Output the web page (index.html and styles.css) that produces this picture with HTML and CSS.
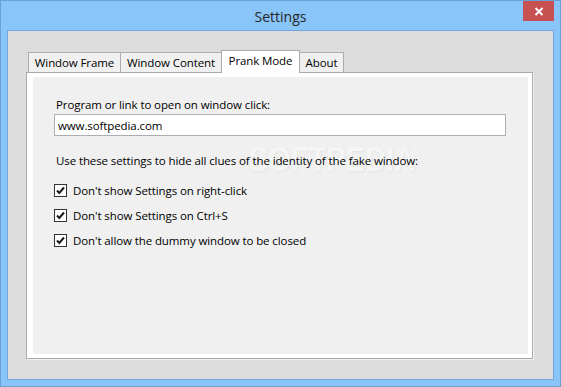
FILE: index.html
```html
<!DOCTYPE html>
<html lang="en">
<head>
    <meta charset="UTF-8">
    <title>Settings</title>
    <link rel="stylesheet" href="styles.css">
</head>
<body>
    <div class="window">
        <div class="titlebar">
            <span class="title">Settings</span>
            <button class="close" title="Close">
                <svg width="10" height="9" viewBox="0 0 10 9">
                    <path d="M1.5 1 L8.5 8 M8.5 1 L1.5 8" stroke="#fff" stroke-width="2"/>
                </svg>
            </button>
        </div>
        <div class="client">
            <div class="tabs">
                <div class="tab tab-frame">Window Frame</div>
                <div class="tab tab-content">Window Content</div>
                <div class="tab tab-prank active">Prank Mode</div>
                <div class="tab tab-about">About</div>
            </div>
            <div class="panel">
                <div class="page">
                    <div class="watermark">SOFTPEDIA<span class="reg">®</span></div>

                    <div class="caption">Program or link to open on window click:</div>
                    <input class="textbox" type="text" value="www.softpedia.com">
                    <div class="caption spaced">Use these settings to hide all clues of the identity of the fake window:</div>

                    <div class="checks">
                        <label class="check">
                            <span class="box"><svg width="11" height="11" viewBox="0 0 11 11"><path d="M2 5.5 L4.3 8 L9 2.5" fill="none" stroke="#1a1a1a" stroke-width="2"/></svg></span>
                            Don't show Settings on right-click
                        </label>
                        <label class="check">
                            <span class="box"><svg width="11" height="11" viewBox="0 0 11 11"><path d="M2 5.5 L4.3 8 L9 2.5" fill="none" stroke="#1a1a1a" stroke-width="2"/></svg></span>
                            Don't show Settings on Ctrl+S
                        </label>
                        <label class="check">
                            <span class="box"><svg width="11" height="11" viewBox="0 0 11 11"><path d="M2 5.5 L4.3 8 L9 2.5" fill="none" stroke="#1a1a1a" stroke-width="2"/></svg></span>
                            Don't allow the dummy window to be closed
                        </label>
                    </div>
                </div>
            </div>
        </div>
    </div>
</body>
</html>
```

FILE: styles.css
```css
* {
    box-sizing: border-box;
}

body {
    margin: 0;
    width: 561px;
    height: 387px;
    font-family: 'Open Sans', 'Noto Sans', sans-serif;
    font-size: 11.5px;
    letter-spacing: -0.1px;
    color: #000;
    user-select: none;
}

.window {
    width: 561px;
    height: 387px;
    background: #89c5f8;
    border: 1px solid #6c9fd5;
    padding: 0 6px 6px 6px;
    display: flex;
    flex-direction: column;
}

.titlebar {
    height: 29px;
    display: grid;
    grid-template-columns: 1fr auto 1fr;
    align-items: center;
}

.title {
    grid-column: 2;
    font-size: 14px;
    letter-spacing: 0;
    color: #262626;
    padding-top: 1px;
}

.close {
    grid-column: 3;
    justify-self: end;
    align-self: start;
    width: 31px;
    height: 20px;
    border: none;
    padding: 0;
    background: #c75050;
    display: flex;
    align-items: center;
    justify-content: center;
}

.client {
    flex: 1;
    background: #dcdcdc;
    border: 1px solid #74a6d9;
    padding: 19px 20px 20px 18px;
    display: flex;
    flex-direction: column;
}

.tabs {
    display: flex;
    align-items: flex-end;
    padding-left: 2px;
    height: 22px;
}

.tab {
    height: 20px;
    line-height: 19px;
    text-align: center;
    background: #f0f0f0;
    border: 1px solid #acacac;
    border-bottom: none;
    margin-right: -1px;
    white-space: nowrap;
}

.tab-frame { width: 93px; }
.tab-content { width: 102px; }
.tab-prank { width: 79px; }
.tab-about { width: 45px; }

.tab.active {
    height: 23px;
    line-height: 20px;
    background: #fff;
    margin-bottom: -1px;
    position: relative;
    z-index: 1;
}

.panel {
    flex: 1;
    background: #fff;
    border: 1px solid #a9a9a9;
    padding: 4px 4px 4px 6px;
    box-shadow: 1px 1px 0 #f2f2f2;
    display: flex;
}

.page {
    flex: 1;
    background: #f0f0f0;
    padding: 20px 21px 0 21px;
    position: relative;
    z-index: 0;
}

.caption {
    line-height: 16px;
    padding-left: 2px;
    margin-bottom: 1px;
}

.caption.spaced {
    margin-top: 17px;
}

.textbox {
    display: block;
    width: 452px;
    height: 22px;
    border: 1px solid #abadb3;
    background: #fff;
    padding: 0 3px;
    font: inherit;
    letter-spacing: inherit;
    color: #000;
    outline: none;
}

.checks {
    margin-top: 13px;
    display: flex;
    flex-direction: column;
    gap: 8px;
}

.check {
    display: flex;
    align-items: center;
    height: 17px;
}

.box {
    width: 13px;
    height: 13px;
    border: 1px solid #333;
    background: #fff;
    margin-right: 6px;
    display: flex;
    align-items: center;
    justify-content: center;
}

/* faint watermark painted under the page content */
.watermark {
    position: absolute;
    left: 216px;
    top: 66px;
    z-index: -1;
    font-family: 'Liberation Sans', sans-serif;
    font-weight: bold;
    font-size: 29px;
    letter-spacing: 0;
    color: #f5f5f5;
    text-shadow: 1px 1px 2px #e4e4e4;
    transform: scaleY(1.2);
}

.watermark .reg {
    font-size: 9px;
    vertical-align: top;
    position: relative;
    top: -2px;
}
```
